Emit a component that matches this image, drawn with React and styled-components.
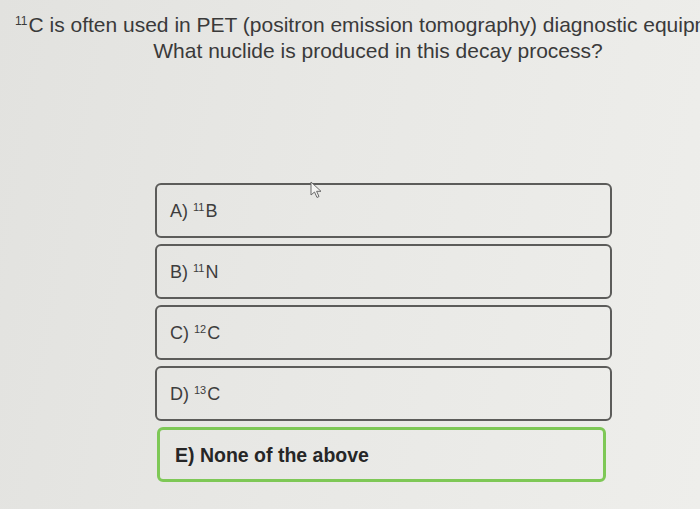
import React from "react"
import styled, { createGlobalStyle } from "styled-components"

const Global = createGlobalStyle`
  html, body {
    margin: 0;
    padding: 0;
    width: 700px;
    height: 509px;
    overflow: hidden;
  }
  body {
    background: linear-gradient(100deg, #e2e2df 0%, #e8e8e5 45%, #eeeeeb 100%);
    font-family: "Liberation Sans", Arial, sans-serif;
  }
`

const options = [
  { key: "A", mass: "11", el: "B" },
  { key: "B", mass: "11", el: "N" },
  { key: "C", mass: "12", el: "C" },
  { key: "D", mass: "13", el: "C" },
]

const App = () => {
  return (
    <Page>
      <Global />
      <Stem>
        <Lead>
          <Sup>11</Sup>C is often used in PET (positron emission tomography) diagnostic equipment.
        </Lead>
        <Prompt>What nuclide is produced in this decay process?</Prompt>
      </Stem>
      <List>
        {options.map((o, i) => (
          <Option key={o.key}>
            <Label>
              {o.key})&nbsp;<Sup small>{o.mass}</Sup>{o.el}
            </Label>
            {i === 0 && (
              <Cursor>
                <svg width="14" height="18" viewBox="0 0 14 18">
                  <path d="M1 1 L1 14 L4.5 11 L7 16.5 L9 15.5 L6.6 10.3 L11 10.3 Z" fill="#f4f4f2" stroke="#6a6a6a" strokeWidth="1" strokeLinejoin="round" />
                </svg>
              </Cursor>
            )}
          </Option>
        ))}
        <Option correct>
          <Label>E) None of the above</Label>
        </Option>
      </List>
    </Page>
  )
}

export default App

const Page = styled.div`
  width: 700px;
  height: 509px;
  position: relative;
  overflow: hidden;
`

const Stem = styled.div`
  width: 726px;
  margin-left: 15px;
  padding-top: 12px;
  font-size: 21px;
  line-height: 26px;
  color: #3a3a3a;
`

const Lead = styled.div`
  white-space: nowrap;
`

const Prompt = styled.div`
  text-align: center;
`

const Sup = styled.span`
  font-size: ${p => (p.small ? "11px" : "12px")};
  vertical-align: ${p => (p.small ? "6px" : "7px")};
  line-height: 0;
  margin-right: 1px;
`

const List = styled.div`
  display: flex;
  flex-direction: column;
  gap: 6px;
  width: 457px;
  margin: 119px 0 0 155px;
`

const Option = styled.div`
  position: relative;
  box-sizing: border-box;
  height: 55px;
  display: flex;
  align-items: center;
  padding: 2px 0 0 ${p => (p.correct ? "15px" : "13px")};
  border: ${p => (p.correct ? "3px solid #7ec856" : "2px solid #5c5c5a")};
  border-radius: 6px;
  margin-left: ${p => (p.correct ? "2px" : "0")};
  width: ${p => (p.correct ? "449px" : "auto")};
  font-size: ${p => (p.correct ? "19.5px" : "18px")};
  font-weight: ${p => (p.correct ? "bold" : "normal")};
  color: ${p => (p.correct ? "#262626" : "#3d3d3d")};
`

const Label = styled.span`
  white-space: nowrap;
`

const Cursor = styled.span`
  position: absolute;
  left: 153px;
  top: -4px;
  line-height: 0;
`
